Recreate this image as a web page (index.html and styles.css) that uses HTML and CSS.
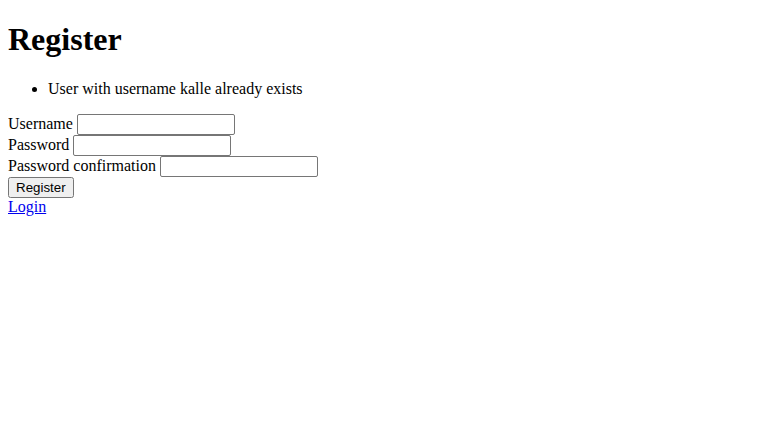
FILE: index.html
```html
<!DOCTYPE html>
<html>
<head>
<meta charset="utf-8">
<title>Register</title>
<link rel="stylesheet" href="styles.css">
</head>
<body class="page">
<h1 class="title">Register</h1>
<ul class="errors">
<li>User with username kalle already exists</li>
</ul>
<form class="form">
<label class="label" for="u">Username</label> <input class="field" id="u" type="text"><br>
<label class="label" for="p">Password</label> <input class="field" id="p" type="password"><br>
<label class="label" for="c">Password confirmation</label> <input class="field" id="c" type="password"><br>
<button class="btn" type="button">Register</button>
</form>
<a class="link" href="#">Login</a>
</body>
</html>
```

FILE: styles.css
```css
.page {
  margin: 8px;
  font-family: "Liberation Serif", "Times New Roman", serif;
  font-size: 16px;
  color: #000;
  background: #fff;
}
.title {
  font-size: 2em;
  font-weight: bold;
  margin: 13.44px 0 21.44px;
}
.errors {
  margin: 1em 0;
  padding-left: 40px;
}
.form {
  margin: 0;
}
.field {
  font-family: "Liberation Sans", Arial, sans-serif;
  font-size: 13.333px;
  width: 152px;
  padding: 2px 2px;
  border: 1px solid #767676;
  border-radius: 2px;
  box-sizing: content-box;
}
.btn {
  font-family: "Liberation Sans", Arial, sans-serif;
  font-size: 13.333px;
}
.link {
  color: #0000ee;
  text-decoration: underline;
}
```
